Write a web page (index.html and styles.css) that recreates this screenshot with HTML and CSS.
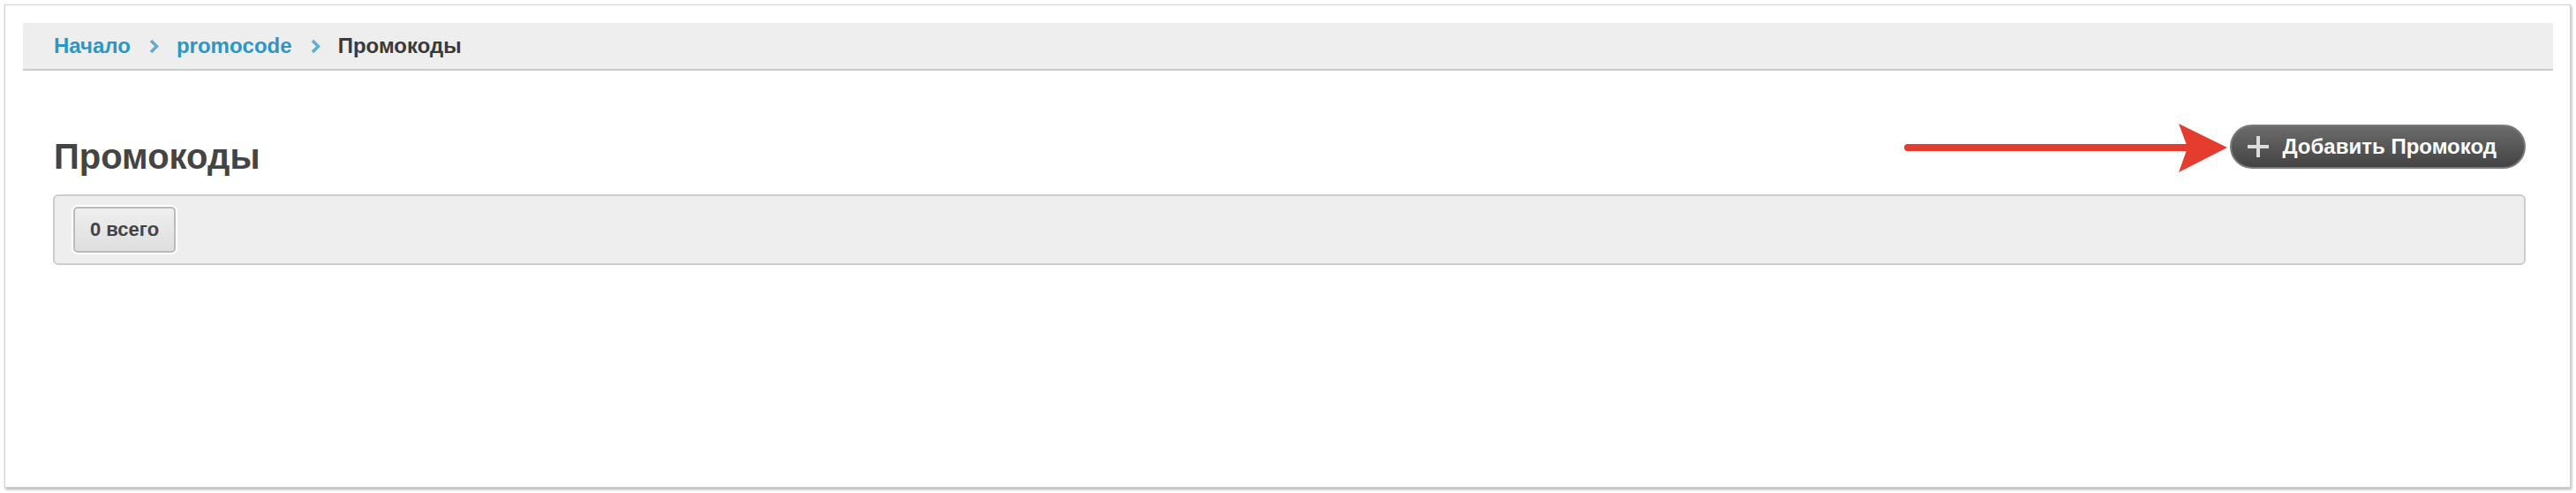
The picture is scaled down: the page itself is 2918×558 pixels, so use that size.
FILE: index.html
```html
<!DOCTYPE html>
<html lang="ru">
<head>
<meta charset="utf-8">
<title>Промокоды</title>
<link rel="stylesheet" href="styles.css">
</head>
<body>
<div class="frame">
  <nav class="breadcrumb">
    <a class="crumb-link" href="#">Начало</a>
    <svg class="crumb-sep" width="11" height="17" viewBox="0 0 11 17"><polyline points="2,2 8.5,8.5 2,15" fill="none" stroke="#62aed0" stroke-width="3.6"/></svg>
    <a class="crumb-link" href="#">promocode</a>
    <svg class="crumb-sep" width="11" height="17" viewBox="0 0 11 17"><polyline points="2,2 8.5,8.5 2,15" fill="none" stroke="#62aed0" stroke-width="3.6"/></svg>
    <span class="crumb-current">Промокоды</span>
  </nav>
  <main class="content">
    <div class="header-row">
      <h1 class="page-title">Промокоды</h1>
      <button class="add-btn" type="button">
        <svg class="plus" width="24" height="24" viewBox="0 0 24 24"><rect x="10" y="0" width="4" height="24" fill="#dcdcdc"/><rect x="0" y="10" width="24" height="4" fill="#dcdcdc"/></svg>
        <span>Добавить Промокод</span>
      </button>
    </div>
    <div class="toolbar">
      <span class="count-btn">0 всего</span>
    </div>
  </main>
</div>
<svg class="annot-arrow" width="372" height="62" viewBox="0 0 372 62">
  <line x1="6" y1="30" x2="326" y2="30" stroke="#e43d30" stroke-width="8" stroke-linecap="round"/>
  <polygon points="313,3 368,30 313,58 323,30" fill="#e43d30"/>
</svg>
</body>
</html>
```

FILE: styles.css
```css
html, body {
  margin: 0;
  padding: 0;
  background: #ffffff;
}

body {
  font-family: "Liberation Sans", Arial, Helvetica, sans-serif;
  position: relative;
  padding-top: 5px;
  height: 558px;
  box-sizing: border-box;
}

.frame {
  margin: 0 6px 0 5px;
  height: 547px;
  box-sizing: border-box;
  background: #fff;
  border: 1px solid #d2d2d2;
  box-shadow: 1px 2px 3px rgba(0, 0, 0, 0.3);
  padding: 20px 19px 0 20px;
}

.breadcrumb {
  display: flex;
  align-items: center;
  height: 52px;
  background: #eeeeee;
  border-bottom: 2px solid #cccccc;
  padding-left: 35px;
  font-size: 24px;
  font-weight: bold;
  line-height: 52px;
}

.crumb-link {
  color: #2c97c4;
  text-decoration: none;
}

.crumb-sep {
  margin: 0 20px 0 21px;
  display: block;
}

.crumb-current {
  color: #3a3a3a;
}

.content {
  padding: 0 31px 0 34px;
}

.header-row {
  display: flex;
  justify-content: space-between;
  align-items: flex-start;
  padding-top: 61px;
  margin-bottom: 19px;
}

.page-title {
  margin: 12px 0 0 1px;
  font-size: 40px;
  line-height: 48px;
  font-weight: bold;
  color: #444444;
}

.add-btn {
  display: flex;
  align-items: center;
  height: 50px;
  box-sizing: border-box;
  margin: 0;
  padding: 0 31px 0 18px;
  border: 2px solid #7a7a7a;
  border-radius: 25px;
  background: linear-gradient(#6b6b6b, #434343);
  color: #ffffff;
  font-family: inherit;
  font-size: 24px;
  font-weight: bold;
  line-height: 46px;
}

.plus {
  display: block;
  margin-right: 15px;
  filter: blur(0.4px);
}

.toolbar {
  background: #eeeeee;
  border: 2px solid #cccccc;
  border-radius: 6px;
  padding: 12px 21px;
  height: 52px;
}

.count-btn {
  display: inline-block;
  height: 52px;
  box-sizing: border-box;
  padding: 0 17px;
  border: 2px solid #bbbbbb;
  border-radius: 5px;
  background: linear-gradient(#efefef, #dedede);
  box-shadow: 0 0 0 2px #ffffff;
  font-size: 22px;
  font-weight: bold;
  line-height: 48px;
  color: #444444;
}

.annot-arrow {
  position: absolute;
  left: 2155px;
  top: 137px;
}
```
